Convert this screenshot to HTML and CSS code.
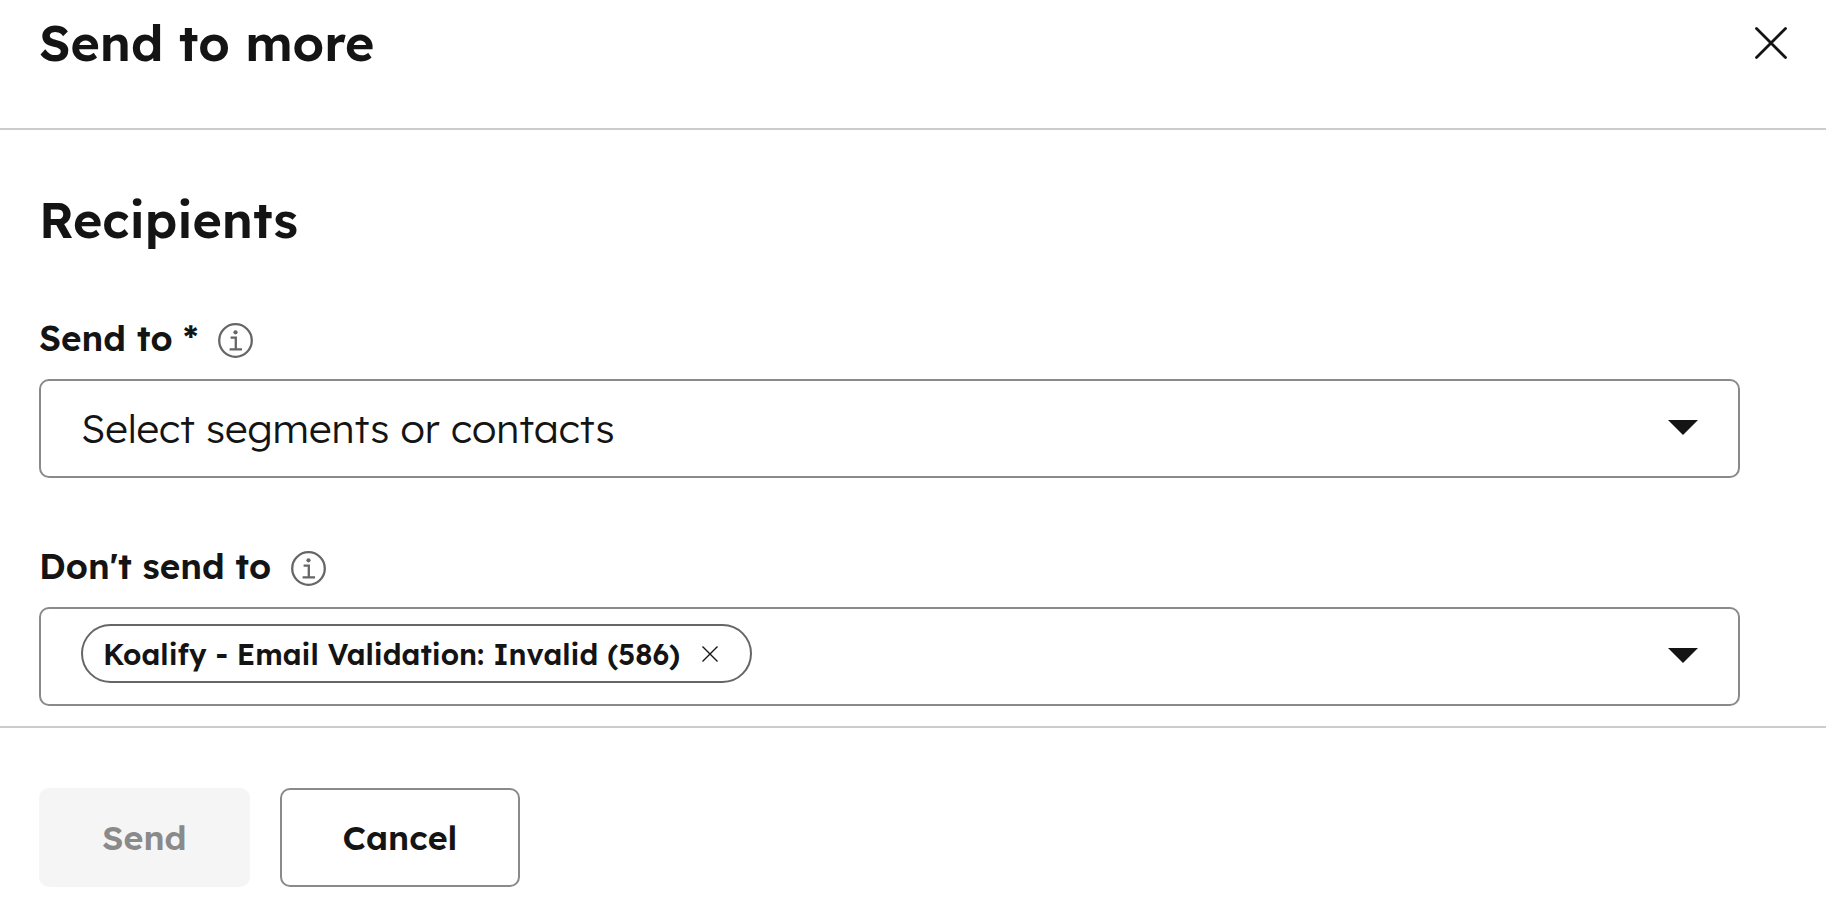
FILE: index.html
```html
<!DOCTYPE html>
<html lang="en">
<head>
<meta charset="utf-8">
<meta name="viewport" content="width=device-width, initial-scale=1">
<title>Send to more</title>
<link rel="stylesheet" href="styles.css">
</head>
<body>
<form class="panel">
  <header class="panel-header">
    <h1 class="heading">Send to more</h1>
    <button class="icon-button" type="button" aria-label="Close">
      <svg class="close-icon" viewBox="0 0 32 32" aria-hidden="true"><path d="M1.5 1.5 30.5 30.5M30.5 1.5 1.5 30.5"/></svg>
    </button>
  </header>

  <main class="panel-body">
    <h2 class="heading">Recipients</h2>

    <div class="fields">
      <div class="field">
        <div class="label-row">
          <label class="label" for="send-to">Send to *</label>
          <button class="icon-button" type="button" aria-label="About Send to">
            <svg class="info-icon" viewBox="0 0 35 35" aria-hidden="true"><circle cx="17.5" cy="17.5" r="16.3"/><path d="M12.6 14.6h5.2v11.8M11.6 26.4h12.4"/><circle class="info-dot" cx="17.5" cy="9.3" r="2.1"/></svg>
          </button>
        </div>
        <div class="control">
          <select class="select" id="send-to" required>
            <option value="">Select segments or contacts</option>
          </select>
          <svg class="caret" viewBox="0 0 30 15" aria-hidden="true"><path d="M0 0h30L15 15z"/></svg>
        </div>
      </div>

      <div class="field">
        <div class="label-row">
          <label class="label" for="dont-send-to">Don't send to</label>
          <button class="icon-button" type="button" aria-label="About Don't send to">
            <svg class="info-icon" viewBox="0 0 35 35" aria-hidden="true"><circle cx="17.5" cy="17.5" r="16.3"/><path d="M12.6 14.6h5.2v11.8M11.6 26.4h12.4"/><circle class="info-dot" cx="17.5" cy="9.3" r="2.1"/></svg>
          </button>
        </div>
        <div class="control">
          <span class="chip">
            <span>Koalify - Email Validation: Invalid (586)</span>
            <button class="icon-button" type="button" aria-label="Remove Koalify - Email Validation: Invalid">
              <svg class="remove-icon" viewBox="0 0 16 16" aria-hidden="true"><path d="M.5.5l15 15M15.5.5l-15 15"/></svg>
            </button>
          </span>
          <select class="select" id="dont-send-to">
            <option value=""></option>
          </select>
          <svg class="caret" viewBox="0 0 30 15" aria-hidden="true"><path d="M0 0h30L15 15z"/></svg>
        </div>
      </div>
    </div>
  </main>

  <footer class="panel-footer">
    <button class="button button-primary" type="submit" disabled>Send</button>
    <button class="button" type="button">Cancel</button>
  </footer>
</form>
</body>
</html>
```
FILE: styles.css
```css
* {
  box-sizing: border-box;
}

body {
  margin: 0;
  background: #fff;
  color: #141414;
  font-family: Lexend, Inter, "Open Sans", sans-serif;
}

.panel {
  display: flex;
  flex-direction: column;
  min-height: 100vh;
}

.panel-header {
  display: flex;
  align-items: flex-start;
  justify-content: space-between;
  padding: 11px 39px 53px;
  border-bottom: 2px solid #ccc;
}

.heading {
  margin: 0;
  font-size: 50px;
  font-weight: 600;
  line-height: 64px;
}

.panel-header .icon-button {
  margin-top: 16px;
}

.icon-button {
  display: flex;
  padding: 0;
  border: 0;
  background: none;
  color: inherit;
  cursor: pointer;
}

.close-icon {
  width: 32px;
  height: 32px;
  fill: none;
  stroke: currentColor;
  stroke-width: 2.8;
  stroke-linecap: round;
}

.panel-body {
  padding: 58px 86px 20px 39px;
}

.fields {
  display: flex;
  flex-direction: column;
  gap: 69px;
  margin-top: 67px;
}

.label-row {
  display: flex;
  align-items: flex-end;
  gap: 20px;
  margin-bottom: 21px;
}

.label {
  font-size: 35px;
  font-weight: 600;
  line-height: 39px;
}

.info-icon {
  width: 35px;
  height: 35px;
  fill: none;
  stroke: #666;
  stroke-width: 2.3;
}

.info-icon .info-dot {
  fill: #666;
  stroke: none;
}

.control {
  position: relative;
  display: flex;
  align-items: center;
  height: 99px;
  padding-left: 40px;
  border: 2px solid #8a8a8a;
  border-radius: 10px;
}

.select {
  flex: 1;
  min-width: 0;
  height: 100%;
  padding: 0 80px 2px 0;
  border: 0;
  appearance: none;
  background: transparent;
  color: inherit;
  font-family: inherit;
  font-size: 40px;
  font-weight: 300;
}

.caret {
  position: absolute;
  top: 39px;
  right: 40px;
  width: 30px;
  height: 15px;
  fill: #141414;
  pointer-events: none;
}

.chip {
  display: flex;
  align-items: center;
  gap: 22px;
  height: 59px;
  margin-bottom: 6px;
  padding: 0 32px 0 20px;
  border: 2px solid #666;
  border-radius: 30px;
  font-size: 29px;
  font-weight: 600;
  white-space: nowrap;
}

.remove-icon {
  width: 16px;
  height: 16px;
  fill: none;
  stroke: currentColor;
  stroke-width: 1.4;
}

.panel-footer {
  display: flex;
  flex: 1;
  align-items: flex-start;
  gap: 30px;
  padding: 60px 39px 24px;
  border-top: 2px solid #ccc;
}

.button {
  height: 99px;
  padding: 0 61px;
  border: 2px solid #8a8a8a;
  border-radius: 10px;
  background: #fff;
  color: #141414;
  font-family: inherit;
  font-size: 34px;
  font-weight: 600;
}

.button-primary {
  border-color: #f5f5f5;
  background: #f5f5f5;
  color: #8a8a8a;
}
```
